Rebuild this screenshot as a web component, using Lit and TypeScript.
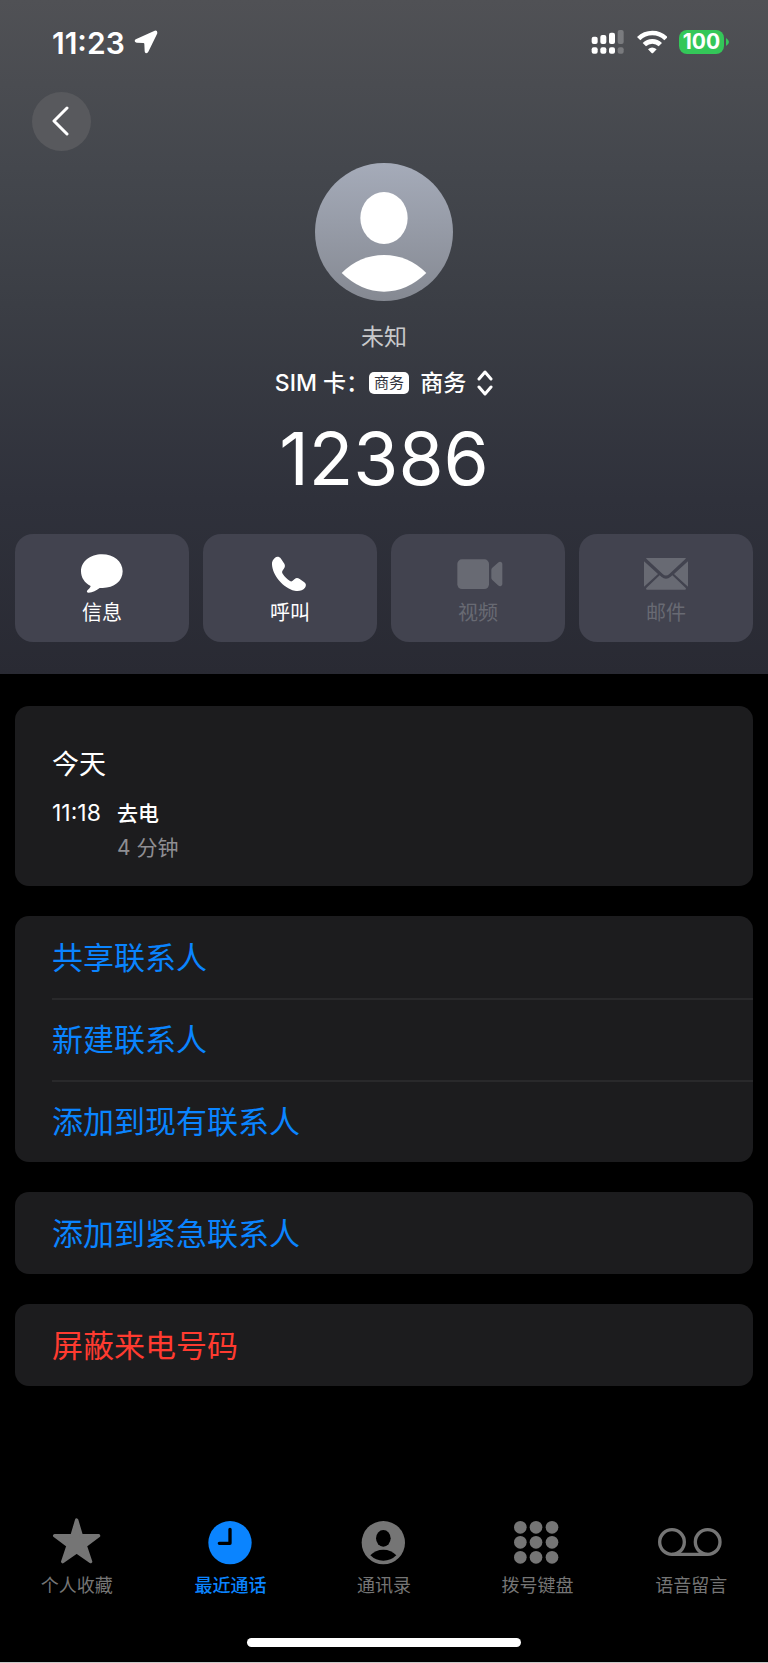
import { LitElement, html, css, svg, nothing, type TemplateResult } from "lit";
import { customElement, property, state } from "lit/decorators.js";
import { classMap } from "lit/directives/class-map.js";

interface Action {
  label: string;
  viewBox: string;
  art: TemplateResult;
  disabled?: boolean;
}

interface Tab {
  id: string;
  label: string;
  viewBox: string;
  art: TemplateResult;
}

const actions: Action[] = [
  {
    label: "信息",
    viewBox: "237 99 138 126",
    art: svg`<path d="M306 103c35 0 62 22 62 51 0 30-26 50-60 50-4 0-6 0-9 0-10 8-21 13-33 14-6 0-7-4-3-8 5-4 8-8 9-12-18-9-29-25-29-44 0-29 28-51 63-51z"/>`,
  },
  {
    label: "呼叫",
    viewBox: "801 99 138 126",
    art: svg`<path d="M825 113c6-4 13-3 18 3l10 15c3 5 2 11-2 16l-4 6c-1 3-1 5 1 8 6 9 13 16 22 22 3 2 5 1 7 0l7-6c5-4 10-3 15 0l14 10c6 4 6 11 2 16-7 8-18 12-31 9-34-8-66-46-68-78-1-9 3-16 9-21z"/>`,
  },
  {
    label: "视频",
    viewBox: "213 99 138 126",
    disabled: true,
    art: svg`<rect x="220" y="118" width="95" height="89" rx="14"/><path d="M322 150q0-4 3-7l17-15q5-4 9-2 4 2 4 6v60q0 5-4 6-4 2-9-2l-17-16q-3-3-3-6z"/>`,
  },
  {
    label: "邮件",
    viewBox: "777 99 138 126",
    disabled: true,
    art: svg`<path d="M788 114h116q3 0 1 2l-49 46q-10 9-20 0l-49-46q-2-2 1-2zM780 124v76l42-38zM912 124v76l-42-38zM827 166l-40 38q-3 5 3 5h112q6 0 3-5l-40-38-5 4q-14 12-28 0z"/>`,
  },
];

const keypadDots = [112, 157, 202].flatMap((y) =>
  [408, 455, 503].map((x) => svg`<circle cx=${x} cy=${y} r="19"/>`)
);

const tabs: Tab[] = [
  {
    id: "favorites",
    label: "个人收藏",
    viewBox: "131 84 198 144",
    art: svg`<path class="round" d="M229 90l14 47h52l-40 30 16 48-42-29-42 29 16-48-40-30h52z"/>`,
  },
  {
    id: "recents",
    label: "最近通话",
    viewBox: "592 84 198 144",
    art: svg`<circle cx="691" cy="158" r="65"/><path class="hands" d="M691 118v42h-32"/>`,
  },
  {
    id: "contacts",
    label: "通讯录",
    viewBox: "1053 84 198 144",
    art: svg`<circle cx="1150" cy="158" r="65"/><ellipse class="hole" cx="1150" cy="145" rx="22" ry="25"/><path class="hole" d="M1111 196q15-17 39-17t39 17q-16 16-39 16t-39-16z"/>`,
  },
  { id: "keypad", label: "拨号键盘", viewBox: "362 84 198 144", art: svg`${keypadDots}` },
  {
    id: "voicemail",
    label: "语音留言",
    viewBox: "823 84 198 144",
    art: svg`<g class="outline"><circle cx="865" cy="156" r="37"/><circle cx="972" cy="156" r="37"/><path d="M865 193h107"/></g>`,
  },
];

@customElement("status-bar")
class StatusBar extends LitElement {
  static styles = css`
    :host {
      display: flex;
      align-items: center;
      justify-content: space-between;
      height: 48px;
      padding: 18px 39px 0 52px;
      color: #fff;
    }
    .side {
      display: flex;
      align-items: center;
    }
    .left {
      gap: 9px;
    }
    .right {
      gap: 12px;
    }
    .time {
      padding-top: 1px;
      font-size: 30px;
      line-height: 36px;
      font-weight: 600;
    }
    svg {
      display: block;
      fill: currentColor;
    }
    .faded {
      opacity: 0.25;
    }
    .arc {
      fill: none;
      stroke: currentColor;
      stroke-width: 14;
    }
    .battery {
      display: flex;
      align-items: center;
      gap: 2px;
      color: #34c759;
    }
    .charge {
      width: 45px;
      border-radius: 8px;
      background: #34c759;
      color: #fff;
      font-size: 21px;
      line-height: 24px;
      font-weight: 700;
      text-align: center;
    }
  `;

  render() {
    return html`
      <div class="side left">
        <time class="time">11:23</time>
        <svg width="24" height="24" viewBox="401 92 72 72" aria-hidden="true">
          <path d="M463 94q8-2 8 6 0 2-1 4l-26 53q-3 5-7 5-4-1-4-6l-1-22q0-3-3-3l-20-1q-6-1-6-5 0-4 5-6z" />
        </svg>
      </div>
      <div class="side right">
        <svg width="34" height="24" viewBox="96 90 102 72" aria-hidden="true">
          <rect x="98" y="110" width="18" height="22" rx="6" />
          <rect x="124" y="105" width="18" height="27" rx="6" />
          <rect x="150" y="98" width="18" height="34" rx="6" />
          <rect class="faded" x="176" y="90" width="18" height="42" rx="6" />
          <rect x="98" y="142" width="18" height="19" rx="6" />
          <rect x="124" y="142" width="18" height="19" rx="6" />
          <rect x="150" y="142" width="18" height="19" rx="6" />
          <rect class="faded" x="176" y="142" width="18" height="19" rx="6" />
        </svg>
        <svg width="30" height="24" viewBox="232 89 90 72" aria-hidden="true">
          <path class="arc" d="M237 115q17-17 41-17t41 17" />
          <path class="arc" d="M254 133q10-10 24-10t24 10" />
          <path d="M265 147q12-11 26 0l-10 10q-3 3-6 0z" />
        </svg>
        <div class="battery">
          <span class="charge">100</span>
          <svg width="3" height="8" viewBox="0 0 3 8" aria-hidden="true"><path d="M0 0q6 4 0 8z" /></svg>
        </div>
      </div>
    `;
  }
}

@customElement("action-button")
class ActionButton extends LitElement {
  @property({ attribute: false }) action!: Action;

  static styles = css`
    :host {
      display: block;
    }
    .action {
      display: flex;
      flex-direction: column;
      align-items: center;
      gap: 3px;
      width: 100%;
      padding: 19px 0 14px;
      border: 0;
      border-radius: 18px;
      background: #42434f;
      color: #fff;
      font: inherit;
      font-size: 20px;
      line-height: 30px;
    }
    .action:disabled {
      color: #686a73;
    }
    svg {
      fill: currentColor;
      overflow: visible;
    }
  `;

  render() {
    const { label, viewBox, art, disabled } = this.action;
    return html`
      <button class="action" type="button" ?disabled=${disabled}>
        <svg width="46" height="42" viewBox=${viewBox} aria-hidden="true">${art}</svg>
        <span>${label}</span>
      </button>
    `;
  }
}

@customElement("tab-bar")
class TabBar extends LitElement {
  @state() private current = "recents";

  static styles = css`
    .tabs {
      display: grid;
      grid-template-columns: repeat(5, 1fr);
    }
    .tab {
      display: flex;
      flex-direction: column;
      align-items: center;
      gap: 6px;
      color: #757575;
      font-size: 18px;
      line-height: 28px;
      text-decoration: none;
    }
    .current {
      color: #0a84ff;
      font-weight: 500;
    }
    svg {
      fill: currentColor;
    }
    .round {
      stroke: currentColor;
      stroke-width: 10;
      stroke-linejoin: round;
    }
    .hands {
      fill: none;
      stroke: #000;
      stroke-width: 10;
      stroke-linecap: round;
      stroke-linejoin: round;
    }
    .hole {
      fill: #000;
    }
    .outline {
      fill: none;
      stroke: currentColor;
      stroke-width: 10;
    }
  `;

  private select(event: Event, id: string) {
    event.preventDefault();
    this.current = id;
  }

  render() {
    return html`
      <nav class="tabs">
        ${tabs.map(
          (tab) => html`
            <a
              class=${classMap({ tab: true, current: tab.id === this.current })}
              href="#${tab.id}"
              aria-current=${tab.id === this.current ? "page" : nothing}
              @click=${(event: Event) => this.select(event, tab.id)}
            >
              <svg width="66" height="48" viewBox=${tab.viewBox} aria-hidden="true">${tab.art}</svg>
              <span>${tab.label}</span>
            </a>
          `
        )}
      </nav>
    `;
  }
}

@customElement("app-root")
class AppRoot extends LitElement {
  static styles = css`
    :host {
      display: flex;
      flex-direction: column;
      box-sizing: border-box;
      min-height: 100vh;
      border-bottom: 1px solid #c8c8c8;
      background: #000;
      color: #fff;
      font-family: Inter, "Noto Sans CJK SC", sans-serif;
    }
    .hero {
      display: flex;
      flex-direction: column;
      padding-bottom: 32px;
      background: linear-gradient(#505155, #44474d 25%, #3b3e45 45%, #2f313b 74%, #292a33);
    }
    .back {
      display: grid;
      place-items: center;
      width: 59px;
      height: 59px;
      margin: 26px 0 0 32px;
      padding: 0 4px 2px 0;
      border: 0;
      border-radius: 50%;
      background: #58595d;
      color: #fff;
    }
    .line {
      fill: none;
      stroke: currentColor;
      stroke-width: 3;
      stroke-linecap: round;
      stroke-linejoin: round;
    }
    .profile {
      display: flex;
      flex-direction: column;
      align-items: center;
      margin-top: 12px;
    }
    .unknown {
      margin: 18px 0 0;
      color: #c8c9cb;
      font-size: 23px;
      line-height: 36px;
    }
    .sim {
      display: flex;
      align-items: center;
      margin-top: 10px;
      font-size: 23px;
      line-height: 36px;
      font-weight: 500;
    }
    .badge {
      margin-right: 11px;
      padding: 0 5px;
      border-radius: 5px;
      background: #fff;
      color: #33353e;
      font-size: 15px;
      line-height: 22px;
      font-weight: 400;
    }
    .picker {
      appearance: none;
      margin: 0 11px 0 0;
      padding: 0;
      border: 0;
      background: none;
      color: inherit;
      font: inherit;
    }
    .number {
      margin: 14px 0 0;
      font-size: 73px;
      line-height: 88px;
      font-weight: 400;
    }
    .actions {
      display: grid;
      grid-template-columns: repeat(4, 1fr);
      gap: 14px;
      margin-top: 31px;
      padding: 0 15px;
    }
    .cards {
      display: flex;
      flex-direction: column;
      gap: 30px;
      padding: 32px 15px;
    }
    .card {
      overflow: hidden;
      border-radius: 14px;
      background: #1c1c1e;
    }
    .log {
      padding: 39px 37px 21px;
    }
    .day {
      margin: 0 0 11px;
      font-size: 27px;
      line-height: 40px;
      font-weight: 400;
    }
    .call {
      display: grid;
      grid-template-columns: auto 1fr;
      align-items: baseline;
      column-gap: 16px;
      font-size: 21px;
      line-height: 34px;
    }
    .at {
      font-size: 23px;
    }
    .kind {
      font-weight: 500;
    }
    .duration {
      grid-column: 2;
      color: #8e8e93;
    }
    .row {
      display: block;
      width: 100%;
      padding: 2px 0 0 37px;
      border: 0;
      background: none;
      color: #0a84ff;
      font: inherit;
      font-size: 31px;
      line-height: 80px;
      text-align: left;
    }
    .row + .row {
      background: linear-gradient(#29292b, #29292b) 37px 0 / 100% 2px no-repeat;
    }
    .danger {
      color: #ff3b30;
    }
    .footer {
      margin-top: auto;
      padding-bottom: 15px;
    }
    .home {
      width: 274px;
      height: 9px;
      margin: 38px auto 0;
      border-radius: 5px;
      background: #fff;
    }
  `;

  render() {
    return html`
      <header class="hero">
        <status-bar></status-bar>
        <button class="back" type="button" aria-label="返回">
          <svg width="18" height="30" viewBox="0 0 18 30" aria-hidden="true">
            <path class="line" d="M16 2L3 15l13 13" />
          </svg>
        </button>
        <div class="profile">
          <svg width="138" height="138" viewBox="196 39 414 414" aria-hidden="true">
            <defs>
              <linearGradient id="shade" x1="0" y1="0" x2="0" y2="1">
                <stop offset="0" stop-color="#a5abb9" />
                <stop offset="1" stop-color="#858992" />
              </linearGradient>
            </defs>
            <circle cx="403" cy="246" r="207" fill="url(#shade)" />
            <ellipse cx="403" cy="204" rx="71" ry="78" fill="#fff" />
            <path d="M276 369q54-54 127-54t127 54q-58 56-127 56t-127-56z" fill="#fff" />
          </svg>
          <p class="unknown">未知</p>
          <div class="sim">
            <label for="sim">SIM 卡：</label>
            <span class="badge">商务</span>
            <select class="picker" id="sim">
              <option>商务</option>
            </select>
            <svg width="16" height="26" viewBox="0 0 16 26" aria-hidden="true">
              <path class="line" d="M2 9l6-7 6 7M2 17l6 7 6-7" />
            </svg>
          </div>
          <h1 class="number">12386</h1>
        </div>
        <div class="actions">
          ${actions.map((action) => html`<action-button .action=${action}></action-button>`)}
        </div>
      </header>
      <main class="cards">
        <section class="card log">
          <h2 class="day">今天</h2>
          <div class="call">
            <time class="at">11:18</time>
            <span class="kind">去电</span>
            <span class="duration">4 分钟</span>
          </div>
        </section>
        <section class="card">
          <button class="row" type="button">共享联系人</button>
          <button class="row" type="button">新建联系人</button>
          <button class="row" type="button">添加到现有联系人</button>
        </section>
        <section class="card">
          <button class="row" type="button">添加到紧急联系人</button>
        </section>
        <section class="card">
          <button class="row danger" type="button">屏蔽来电号码</button>
        </section>
      </main>
      <footer class="footer">
        <tab-bar></tab-bar>
        <div class="home"></div>
      </footer>
    `;
  }
}
